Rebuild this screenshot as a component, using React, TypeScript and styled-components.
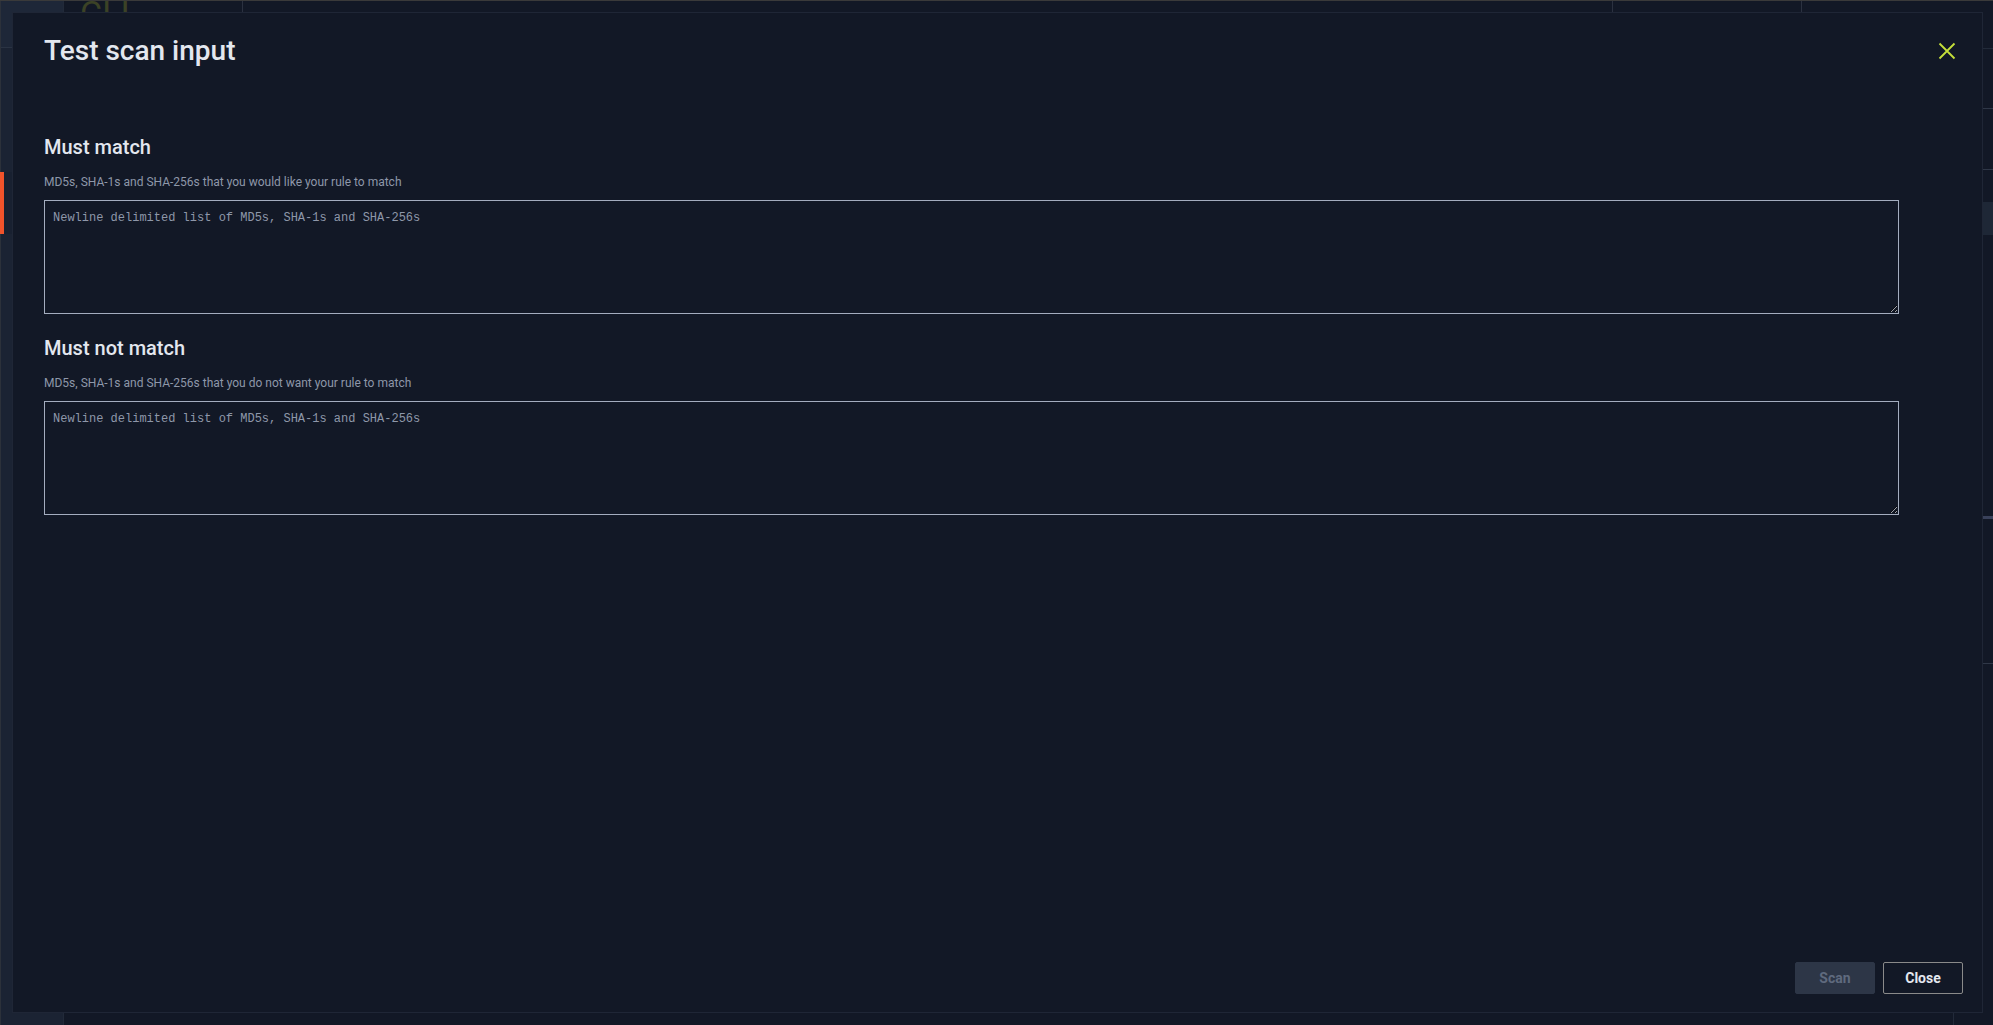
import { createGlobalStyle, styled } from "styled-components";

const colors = {
  page: "#121826",
  sidebar: "#1b2333",
  line: "#222a39",
  modal: "#121826",
  modalBorder: "#1f2636",
  title: "#e3e7ef",
  muted: "#8e97a9",
  field: "#a4adbf",
  accent: "#c5df3a",
  scanBg: "#2d3647",
  scanText: "#5f6a7e",
  closeBorder: "#8a8a8a",
  orange: "#f1532b",
};

const GlobalStyle = createGlobalStyle`
  html, body {
    margin: 0;
    padding: 0;
    background: ${colors.page};
    font-family: Roboto, "Noto Sans", Arial, sans-serif;
    overflow: hidden;
  }
  * {
    box-sizing: border-box;
  }
`;

const App = () => {
  return (
    <>
      <GlobalStyle />
      <Shell>
        <Sidebar>
          <SidebarHead />
          <SidebarItem />
          <SidebarItem />
          <SidebarItem $active />
        </Sidebar>
        <Main>
          <TopBar>
            <Brand>CLI</Brand>
            <TopCell $grow />
            <TopCell $width={189} />
            <TopTools>
              <Badge />
              <Avatar />
            </TopTools>
          </TopBar>
          <Body>
            <BodyMain />
            <SidePanel>
              <PanelRow $height={60} />
              <PanelRow $height={61} />
              <PanelGap />
              <PanelRow $height={284} $strong />
              <PanelRow $height={145} />
            </SidePanel>
          </Body>
        </Main>
      </Shell>

      <Modal role="dialog" aria-label="Test scan input">
        <Header>
          <Title>Test scan input</Title>
          <IconButton aria-label="Close">
            <svg width="18" height="18" viewBox="0 0 18 18" fill="none">
              <path
                d="M1.5 1.5L16.5 16.5M16.5 1.5L1.5 16.5"
                stroke={colors.accent}
                strokeWidth="1.8"
              />
            </svg>
          </IconButton>
        </Header>

        <Sections>
          <Section>
            <SectionTitle>Must match</SectionTitle>
            <Hint>MD5s, SHA-1s and SHA-256s that you would like your rule to match</Hint>
            <HashField placeholder="Newline delimited list of MD5s, SHA-1s and SHA-256s" />
          </Section>
          <Section>
            <SectionTitle>Must not match</SectionTitle>
            <Hint>MD5s, SHA-1s and SHA-256s that you do not want your rule to match</Hint>
            <HashField placeholder="Newline delimited list of MD5s, SHA-1s and SHA-256s" />
          </Section>
        </Sections>

        <Footer>
          <Button $variant="disabled" disabled>
            Scan
          </Button>
          <Button $variant="outline">Close</Button>
        </Footer>
      </Modal>
    </>
  );
};

export default App;

const Shell = styled.div`
  display: flex;
  width: 1993px;
  height: 1025px;
  border-top: 1px solid #3a3a3a;
  background: ${colors.page};
`;

const Sidebar = styled.div`
  width: 64px;
  display: flex;
  flex-direction: column;
  background: ${colors.sidebar};
  border-left: 1px solid #2c313a;
  border-right: 1px solid ${colors.line};
`;

const SidebarHead = styled.div`
  height: 47px;
  background: #1e2738;
  border-bottom: 1px solid #2a3343;
`;

const SidebarItem = styled.div<{ $active?: boolean }>`
  height: 62px;
  background: ${(p) => (p.$active ? "#182030" : "transparent")};
  border-left: 4px solid ${(p) => (p.$active ? colors.orange : "transparent")};
  margin-left: -1px;
`;

const Main = styled.div`
  flex: 1;
  display: flex;
  flex-direction: column;
`;

const TopBar = styled.div`
  height: 48px;
  display: flex;
  align-items: stretch;
  border-bottom: 1px solid ${colors.line};
`;

const Brand = styled.div`
  width: 179px;
  padding: 0 0 0 16px;
  font-size: 34px;
  line-height: 24px;
  color: #3b4226;
  border-right: 1px solid #2b3140;
  overflow: hidden;
`;

const TopCell = styled.div<{ $grow?: boolean; $width?: number }>`
  flex: ${(p) => (p.$grow ? 1 : "none")};
  width: ${(p) => (p.$width ? `${p.$width}px` : "auto")};
  border-right: 1px solid #2b3140;
`;

const TopTools = styled.div`
  width: 191px;
  display: flex;
  align-items: center;
  justify-content: flex-end;
  gap: 18px;
  padding-right: 33px;
`;

const Badge = styled.span`
  width: 6px;
  height: 6px;
  border-radius: 50%;
  background: #e5483a;
  margin-top: -14px;
`;

const Avatar = styled.span`
  width: 24px;
  height: 24px;
  border-radius: 50%;
  background: #d9dde4;
`;

const Body = styled.div`
  flex: 1;
  display: flex;
`;

const BodyMain = styled.div`
  flex: 1;
`;

const SidePanel = styled.div`
  width: 40px;
  display: flex;
  flex-direction: column;
  border-left: 1px solid ${colors.line};
`;

const PanelRow = styled.div<{ $height: number; $strong?: boolean }>`
  height: ${(p) => p.$height}px;
  border-bottom: ${(p) => (p.$strong ? "3px solid #39415a" : "1px solid #2f3747")};
`;

const PanelGap = styled.div`
  height: 33px;
  margin-top: 32px;
  background: #1e2736;
`;

const Modal = styled.div`
  position: fixed;
  top: 12px;
  left: 12px;
  width: 1971px;
  height: 1001px;
  display: flex;
  flex-direction: column;
  background: ${colors.modal};
  border: 1px solid ${colors.modalBorder};
  padding: 20px 19px 18px 31px;
`;

const Header = styled.div`
  display: flex;
  align-items: center;
  justify-content: space-between;
  height: 36px;
`;

const Title = styled.h1`
  margin: 0;
  font-size: 28px;
  line-height: 36px;
  font-weight: 500;
  color: ${colors.title};
`;

const IconButton = styled.button`
  width: 32px;
  height: 32px;
  display: flex;
  align-items: center;
  justify-content: center;
  padding: 0;
  background: none;
  border: none;
  cursor: pointer;
`;

const Sections = styled.div`
  display: flex;
  flex-direction: column;
  gap: 20px;
  margin-top: 64px;
`;

const Section = styled.section`
  display: flex;
  flex-direction: column;
`;

const SectionTitle = styled.h2`
  margin: 0;
  font-size: 20px;
  line-height: 28px;
  font-weight: 500;
  color: ${colors.title};
`;

const Hint = styled.p`
  margin: 13px 0 10px;
  font-size: 12px;
  line-height: 16px;
  color: ${colors.muted};
`;

const HashField = styled.textarea`
  width: 1855px;
  height: 114px;
  padding: 9px 8px;
  background: transparent;
  border: 1px solid ${colors.field};
  border-radius: 0;
  color: ${colors.title};
  font-family: "Liberation Mono", "DejaVu Sans Mono", monospace;
  font-size: 12px;
  line-height: 16px;
  outline: none;
  resize: vertical;
  &::placeholder {
    color: ${colors.muted};
  }
`;

const Footer = styled.div`
  margin-top: auto;
  display: flex;
  justify-content: flex-end;
  gap: 8px;
`;

const Button = styled.button<{ $variant: "disabled" | "outline" }>`
  width: 80px;
  height: 32px;
  border-radius: 2px;
  font-family: Roboto, Arial, sans-serif;
  font-size: 14px;
  font-weight: 700;
  cursor: ${(p) => (p.$variant === "disabled" ? "default" : "pointer")};
  background: ${(p) => (p.$variant === "disabled" ? colors.scanBg : "transparent")};
  color: ${(p) => (p.$variant === "disabled" ? colors.scanText : colors.title)};
  border: 1px solid
    ${(p) => (p.$variant === "disabled" ? colors.scanBg : colors.closeBorder)};
`;
